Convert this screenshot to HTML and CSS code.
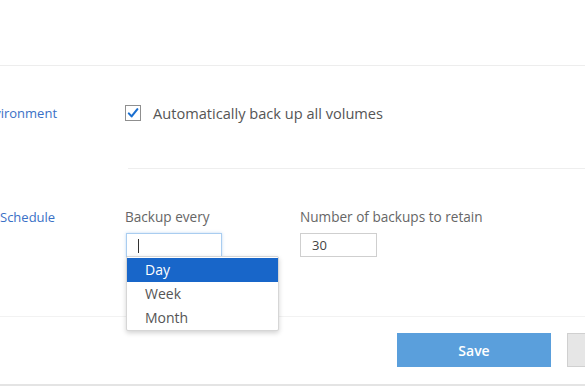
FILE: index.html
```html
<!DOCTYPE html>
<html lang="en">
<head>
    <meta charset="UTF-8">
    <title>Backup Settings</title>
    <link rel="stylesheet" href="styles.css">
</head>
<body>
    <div class="page">
        <div class="top-space"></div>

        <div class="settings-row">
            <div class="field-label clipped">Environment</div>
            <div class="field-body first">
                <label class="check">
                    <span class="check-box">
                        <svg width="12" height="12" viewBox="0 0 12 12"><path d="M1.8 6.4 L4.6 9.4 L10.4 2.2" fill="none" stroke="#1a6fd0" stroke-width="2.1" stroke-linecap="round" stroke-linejoin="round"/></svg>
                    </span>
                    Automatically back up all volumes
                </label>
            </div>
        </div>

        <div class="settings-row schedule">
            <div class="field-label">Schedule</div>
            <div class="field-body fields">
                <div class="field">
                    <div class="field-title">Backup every</div>
                    <div class="select-wrap">
                        <div class="text-input focused"><span class="caret"></span></div>
                        <ul class="dropdown">
                            <li class="selected">Day</li>
                            <li>Week</li>
                            <li>Month</li>
                        </ul>
                    </div>
                </div>
                <div class="field">
                    <div class="field-title">Number of backups to retain</div>
                    <div class="text-input small">30</div>
                </div>
            </div>
        </div>

        <div class="actions">
            <button class="btn btn-primary">Save</button>
            <button class="btn btn-secondary" aria-label="Cancel"></button>
        </div>
    </div>
</body>
</html>
```

FILE: styles.css
```css
/* Base */
body {
    margin: 0;
    background: #fff;
    font-family: 'Open Sans', 'Liberation Sans', sans-serif;
    color: #555;
    overflow: hidden;
}

.page {
    width: 585px;
    height: 390px;
    overflow: hidden;
}

.top-space {
    height: 65px;
    border-bottom: 1px solid #ededed;
}

/* Rows */
.settings-row {
    display: flex;
}

.field-label {
    width: 125px;
    flex-shrink: 0;
    padding-top: 38px;
    font-size: 13px;
    line-height: 18px;
    color: #3a70c6;
    white-space: nowrap;
}

.field-label.clipped {
    text-indent: -21px;
}

.field-body {
    flex: 1;
}

.field-body.first {
    margin-left: 3px;
    height: 103px;
    border-bottom: 1px solid #eeeeee;
    box-sizing: border-box;
    padding-top: 38px;
}

.check {
    display: flex;
    align-items: center;
    gap: 12px;
    margin-left: -3px;
    font-size: 14.6px;
    line-height: 18px;
    color: #555;
}

.check-box {
    width: 14px;
    height: 14px;
    border: 1px solid #8f8f8f;
    background: #fff;
    display: flex;
    align-items: center;
    justify-content: center;
}

/* Schedule */
.schedule {
    height: 147px;
    border-bottom: 1px solid #f2f2f2;
}

.schedule .field-label {
    padding-top: 39px;
}

.fields {
    display: flex;
    gap: 78px;
    padding-top: 39px;
}

.field-title {
    font-size: 13.6px;
    line-height: 18px;
    color: #666;
    margin-bottom: 7px;
    white-space: nowrap;
}

.select-wrap {
    position: relative;
    margin-left: 1px;
}

.text-input {
    box-sizing: border-box;
    height: 24px;
    border: 1px solid #cfcfcf;
    font-size: 13px;
    line-height: 22px;
    padding-left: 11px;
    color: #444;
}

.text-input.focused {
    width: 96px;
    border-color: #a9cdf0;
    box-shadow: 0 0 3px rgba(120, 170, 230, 0.45);
}

.text-input.small {
    width: 77px;
}

.caret {
    display: inline-block;
    width: 1px;
    height: 14px;
    background: #333;
    vertical-align: middle;
    margin-top: -2px;
}

.dropdown {
    position: absolute;
    top: 23px;
    left: 0;
    width: 153px;
    margin: 0;
    padding: 1px 0 0;
    list-style: none;
    background: #fff;
    border: 1px solid #d6d6d6;
    border-radius: 2px;
    box-shadow: 0 2px 5px rgba(0, 0, 0, 0.18);
    box-sizing: border-box;
}

.dropdown li {
    height: 24px;
    line-height: 24px;
    padding-left: 18px;
    font-size: 14px;
    color: #555;
}

.dropdown li.selected {
    background: #1866c9;
    color: #fff;
}

/* Buttons */
.actions {
    display: flex;
    gap: 16px;
    padding: 16px 0 0 397px;
    height: 51px;
    border-bottom: 2px solid #e4e4e4;
}

.btn {
    flex-shrink: 0;
    height: 34px;
    font-family: 'Open Sans', 'Liberation Sans', sans-serif;
    font-size: 14px;
    font-weight: 600;
    border: 0;
    padding: 0;
}

.btn-primary {
    width: 154px;
    background: #5a9fdc;
    color: #fff;
}

.btn-secondary {
    width: 154px;
    background: #e6e6e6;
    border: 1px solid #d0d0d0;
}
```
